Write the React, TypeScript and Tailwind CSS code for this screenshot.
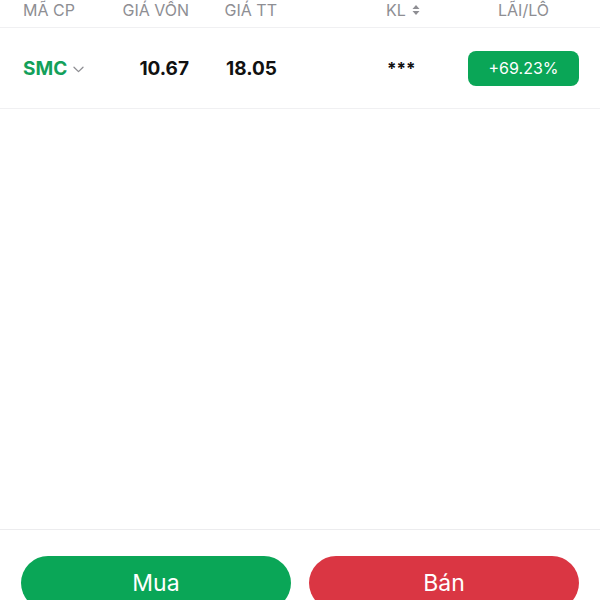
import React from "react";

type Holding = {
  code: string;
  cost: string;
  market: string;
  qty: string;
  pnl: string;
};

const holdings: Holding[] = [
  { code: "SMC", cost: "10.67", market: "18.05", qty: "***", pnl: "+69.23%" },
];

function SortIcon() {
  return (
    <svg width="8" height="12" viewBox="0 0 8 12" className="ml-[6px]">
      <path d="M4 1 L7.5 5 H0.5 Z" fill="#8e8e93" />
      <path d="M4 11 L7.5 7 H0.5 Z" fill="#8e8e93" />
    </svg>
  );
}

function Chevron() {
  return (
    <svg width="11" height="7" viewBox="0 0 11 7" className="ml-[6px]">
      <path d="M1 1.2 L5.5 5.6 L10 1.2" fill="none" stroke="#8e8e93" strokeWidth="1.3" strokeLinecap="round" strokeLinejoin="round" />
    </svg>
  );
}

export default function App() {
  return (
    <div
      className="flex h-[600px] w-[600px] flex-col overflow-hidden bg-white"
      style={{ fontFamily: "Inter, 'Noto Sans', sans-serif" }}
    >
      {/* column headers */}
      <div className="flex h-[28px] shrink-0 items-start border-b border-[#f0f0f2] pl-[23px] text-[16px] leading-[20px] text-[#8e8e93]">
        <div className="w-[83px]">MÃ CP</div>
        <div className="w-[83px] text-right">GIÁ VỐN</div>
        <div className="w-[88px] text-right">GIÁ TT</div>
        <div className="w-[109px]" />
        <div className="flex w-[82px] items-center">
          KL
          <SortIcon />
        </div>
        <div className="w-[111px] text-center">LÃI/LÔ</div>
      </div>

      {holdings.map((h) => (
        <div
          key={h.code}
          className="flex h-[81px] shrink-0 items-center border-b border-[#f0f0f2] pl-[23px] pt-[2px] text-[19px] font-bold text-[#111111]"
        >
          <div className="flex w-[83px] items-center text-[#13a05a]">
            {h.code}
            <Chevron />
          </div>
          <div className="w-[83px] text-right">{h.cost}</div>
          <div className="w-[88px] text-right">{h.market}</div>
          <div className="w-[109px]" />
          <div className="w-[82px] pl-[1px] text-[17px] leading-none">{h.qty}</div>
          <div className="-mt-[2px] flex h-[35px] w-[111px] items-center justify-center rounded-[8px] bg-[#0aa657] text-[16px] font-normal text-white">
            {h.pnl}
          </div>
        </div>
      ))}

      <div className="flex-1" />

      {/* trade actions */}
      <div className="flex h-[71px] shrink-0 items-start gap-[18px] border-t border-[#ececee] px-[21px] pt-[26px]">
        <button className="flex h-[54px] flex-1 shrink-0 items-center justify-center rounded-full bg-[#0aa657] text-[23px] text-white">
          Mua
        </button>
        <button className="flex h-[54px] flex-1 shrink-0 items-center justify-center rounded-full bg-[#da3643] text-[23px] text-white">
          Bán
        </button>
      </div>
    </div>
  );
}
